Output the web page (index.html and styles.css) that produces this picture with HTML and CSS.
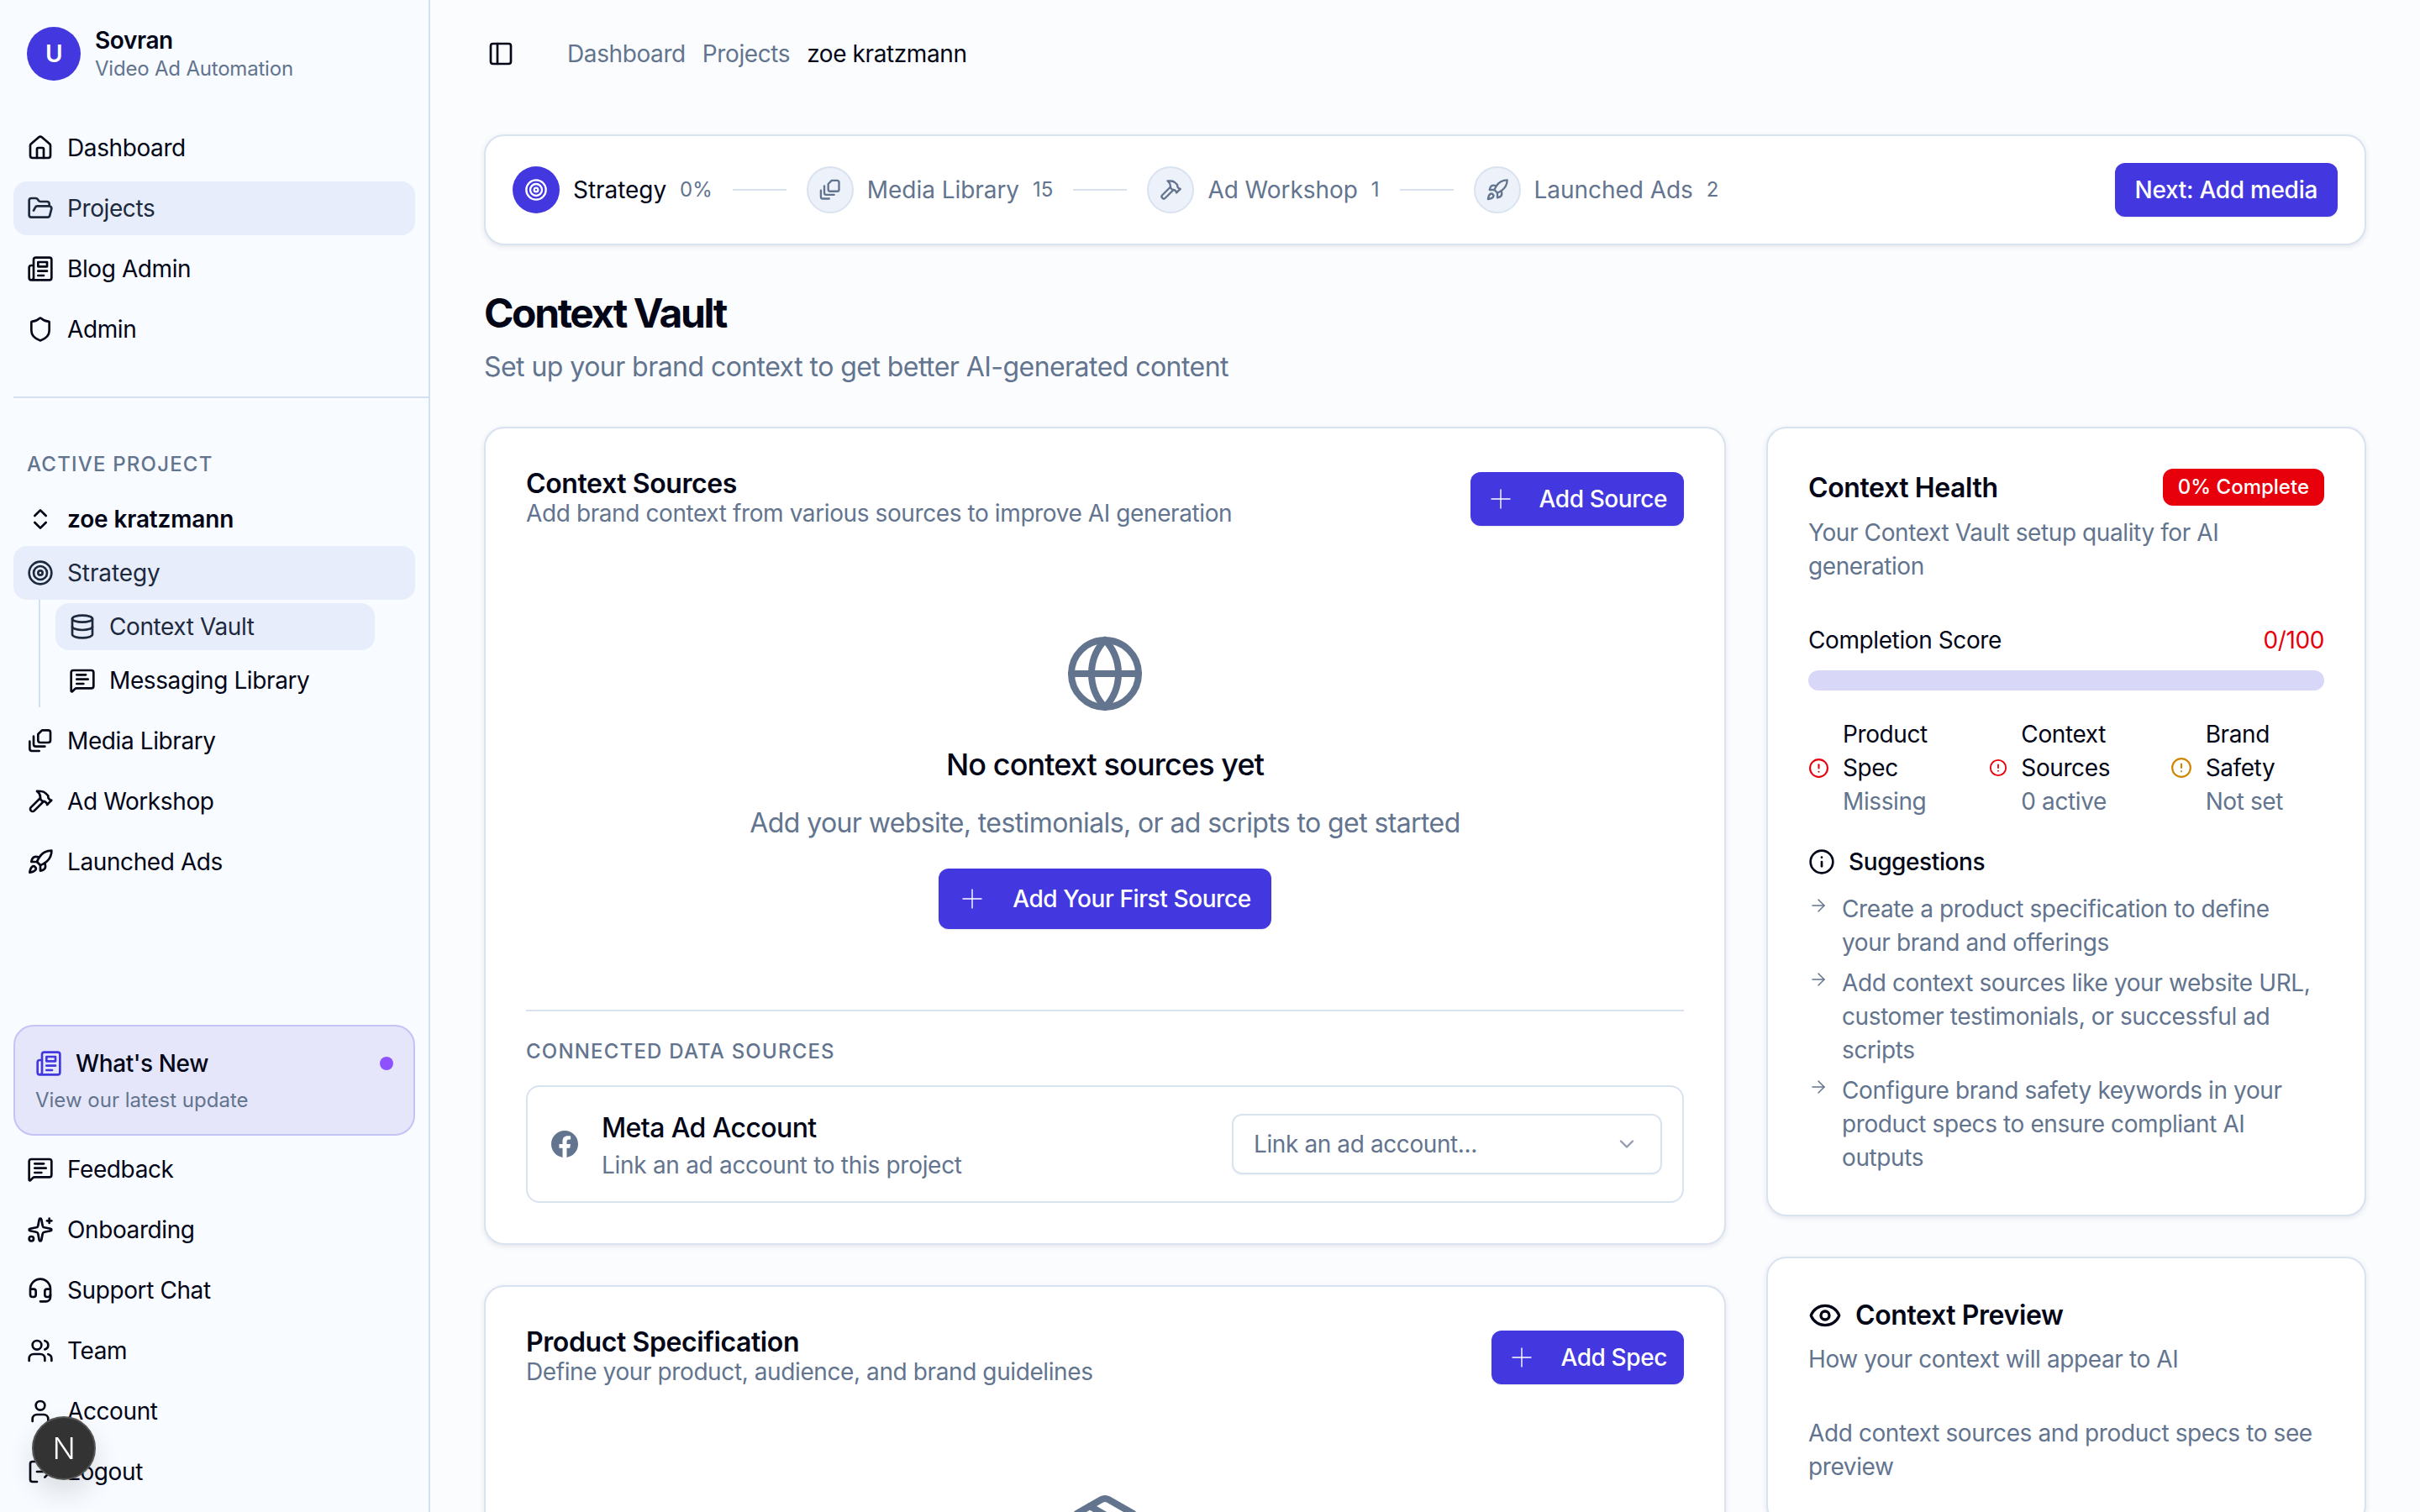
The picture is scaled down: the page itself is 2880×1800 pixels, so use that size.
FILE: index.html
```html
<!DOCTYPE html>
<html lang="en">
  <head>
    <meta charset="utf-8">
    <title>Context Vault - Sovran</title>
    <link rel="stylesheet" href="styles.css">
  </head>
  <body>
    <svg class="sprite" xmlns="http://www.w3.org/2000/svg">
      <symbol id="i-house" viewBox="0 0 24 24"><path d="M15 21v-8a1 1 0 0 0-1-1h-4a1 1 0 0 0-1 1v8"/><path d="M3 10a2 2 0 0 1 .709-1.528l7-5.999a2 2 0 0 1 2.582 0l7 5.999A2 2 0 0 1 21 10v9a2 2 0 0 1-2 2H5a2 2 0 0 1-2-2z"/></symbol>
      <symbol id="i-folder" viewBox="0 0 24 24"><path d="m6 14 1.5-2.9A2 2 0 0 1 9.24 10H20a2 2 0 0 1 1.94 2.5l-1.54 6a2 2 0 0 1-1.95 1.5H4a2 2 0 0 1-2-2V5a2 2 0 0 1 2-2h3.9a2 2 0 0 1 1.69.9l.81 1.2a2 2 0 0 0 1.67.9H18a2 2 0 0 1 2 2v2"/></symbol>
      <symbol id="i-news" viewBox="0 0 24 24"><path d="M4 22h16a2 2 0 0 0 2-2V4a2 2 0 0 0-2-2H8a2 2 0 0 0-2 2v16a2 2 0 0 1-2 2Zm0 0a2 2 0 0 1-2-2v-9c0-1.1.9-2 2-2h2"/><path d="M18 14h-8"/><path d="M15 18h-5"/><path d="M10 6h8v4h-8V6Z"/></symbol>
      <symbol id="i-shield" viewBox="0 0 24 24"><path d="M20 13c0 5-3.5 7.5-7.66 8.95a1 1 0 0 1-.67-.01C7.5 20.5 4 18 4 13V6a1 1 0 0 1 1-1c2 0 4.5-1.2 6.24-2.72a1.17 1.17 0 0 1 1.52 0C14.51 3.81 17 5 19 5a1 1 0 0 1 1 1z"/></symbol>
      <symbol id="i-updown" viewBox="0 0 24 24"><path d="m7 15 5 5 5-5"/><path d="m7 9 5-5 5 5"/></symbol>
      <symbol id="i-target" viewBox="0 0 24 24"><circle cx="12" cy="12" r="10"/><circle cx="12" cy="12" r="6"/><circle cx="12" cy="12" r="2"/></symbol>
      <symbol id="i-db" viewBox="0 0 24 24"><ellipse cx="12" cy="5" rx="9" ry="3"/><path d="M3 5V19A9 3 0 0 0 21 19V5"/><path d="M3 12A9 3 0 0 0 21 12"/></symbol>
      <symbol id="i-msg" viewBox="0 0 24 24"><path d="M22 17a2 2 0 0 1-2 2H6.828a2 2 0 0 0-1.414.586l-2.202 2.202A.71.71 0 0 1 2 21.286V5a2 2 0 0 1 2-2h16a2 2 0 0 1 2 2z"/><path d="M7 11h10"/><path d="M7 15h6"/><path d="M7 7h8"/></symbol>
      <symbol id="i-media" viewBox="0 0 24 24"><path d="M13.5 2.5H19a2 2 0 0 1 2 2v7a2 2 0 0 1-2 2h-7a2 2 0 0 1-2-2V6z"/><path d="M6 8v7a2 2 0 0 0 2 2h8"/><path d="M2.5 12.5V19a2 2 0 0 0 2 2H11"/></symbol>
      <symbol id="i-hammer" viewBox="0 0 24 24"><path d="m15 12-8.373 8.373a1 1 0 1 1-3-3L12 9"/><path d="m18 15 4-4"/><path d="m21.5 11.5-1.914-1.914A2 2 0 0 1 19 8.172V7l-2.26-2.26a6 6 0 0 0-4.202-1.756L9 2.96l.92.82A6.18 6.18 0 0 1 12 8.4V10l2 2h1.172a2 2 0 0 1 1.414.586L18.5 14.5"/></symbol>
      <symbol id="i-rocket" viewBox="0 0 24 24"><path d="M4.5 16.5c-1.5 1.26-2 5-2 5s3.74-.5 5-2c.71-.84.7-2.13-.09-2.91a2.18 2.18 0 0 0-2.91-.09z"/><path d="m12 15-3-3a22 22 0 0 1 2-3.95A12.88 12.88 0 0 1 22 2c0 2.72-.78 7.5-6 11a22.35 22.35 0 0 1-4 2z"/><path d="M9 12H4s.55-3.03 2-4c1.62-1.08 5 0 5 0"/><path d="M12 15v5s3.03-.55 4-2c1.08-1.62 0-5 0-5"/></symbol>
      <symbol id="i-spark" viewBox="0 0 24 24"><path d="M11.017 2.814a1 1 0 0 1 1.966 0l1.051 5.558a2 2 0 0 0 1.594 1.594l5.558 1.051a1 1 0 0 1 0 1.966l-5.558 1.051a2 2 0 0 0-1.594 1.594l-1.051 5.558a1 1 0 0 1-1.966 0l-1.051-5.558a2 2 0 0 0-1.594-1.594l-5.558-1.051a1 1 0 0 1 0-1.966l5.558-1.051a2 2 0 0 0 1.594-1.594z"/><path d="M20 2v4"/><path d="M22 4h-4"/><circle cx="4" cy="20" r="2"/></symbol>
      <symbol id="i-headset" viewBox="0 0 24 24"><path d="M3 11h3a2 2 0 0 1 2 2v3a2 2 0 0 1-2 2H5a2 2 0 0 1-2-2v-5Zm0 0a9 9 0 1 1 18 0m0 0v5a2 2 0 0 1-2 2h-1a2 2 0 0 1-2-2v-3a2 2 0 0 1 2-2h3Z"/><path d="M21 16v2a4 4 0 0 1-4 4h-5"/></symbol>
      <symbol id="i-users" viewBox="0 0 24 24"><path d="M16 21v-2a4 4 0 0 0-4-4H6a4 4 0 0 0-4 4v2"/><path d="M16 3.128a4 4 0 0 1 0 7.744"/><path d="M22 21v-2a4 4 0 0 0-3-3.87"/><circle cx="9" cy="7" r="4"/></symbol>
      <symbol id="i-user" viewBox="0 0 24 24"><path d="M19 21v-2a4 4 0 0 0-4-4H9a4 4 0 0 0-4 4v2"/><circle cx="12" cy="7" r="4"/></symbol>
      <symbol id="i-logout" viewBox="0 0 24 24"><path d="m16 17 5-5-5-5"/><path d="M21 12H9"/><path d="M9 21H5a2 2 0 0 1-2-2V5a2 2 0 0 1 2-2h4"/></symbol>
      <symbol id="i-panel" viewBox="0 0 24 24"><rect x="3" y="3" width="18" height="18" rx="2"/><path d="M9 3v18"/></symbol>
      <symbol id="i-plus" viewBox="0 0 24 24"><path d="M1 12h22"/><path d="M12 1v22"/></symbol>
      <symbol id="i-globe" viewBox="0 0 24 24"><circle cx="12" cy="12" r="10"/><path d="M12 2a14.5 14.5 0 0 0 0 20 14.5 14.5 0 0 0 0-20"/><path d="M2 12h20"/></symbol>
      <symbol id="i-chevron" viewBox="0 0 24 24"><path d="m6 9 6 6 6-6"/></symbol>
      <symbol id="i-alert" viewBox="0 0 24 24"><circle cx="12" cy="12" r="10"/><path d="M12 8v4"/><path d="M12 16h.01"/></symbol>
      <symbol id="i-info" viewBox="0 0 24 24"><circle cx="12" cy="12" r="10"/><path d="M12 16v-4"/><path d="M12 8h.01"/></symbol>
      <symbol id="i-arrow" viewBox="0 0 24 24"><path d="M5 12h14"/><path d="m12 5 7 7-7 7"/></symbol>
      <symbol id="i-eye" viewBox="0 0 24 24"><path d="M2.062 12.348a1 1 0 0 1 0-.696 10.75 10.75 0 0 1 19.876 0 1 1 0 0 1 0 .696 10.75 10.75 0 0 1-19.876 0"/><circle cx="12" cy="12" r="3"/></symbol>
      <symbol id="i-package" viewBox="0 0 24 24"><path d="M11 21.73a2 2 0 0 0 2 0l7-4A2 2 0 0 0 21 16V8a2 2 0 0 0-1-1.73l-7-4a2 2 0 0 0-2 0l-7 4A2 2 0 0 0 3 8v8a2 2 0 0 0 1 1.73z"/><path d="M12 22V12"/><path d="m3.3 7 8.7 5 8.7-5"/><path d="m7.5 4.27 9 5.15"/></symbol>
    </svg>

    <aside class="sidebar">
      <div class="brand">
        <div class="avatar">U</div>
        <div>
          <div class="brand-name">Sovran</div>
          <div class="brand-sub">Video Ad Automation</div>
        </div>
      </div>

      <nav class="nav">
        <a class="nav-item"><svg class="icon"><use href="#i-house"/></svg>Dashboard</a>
        <a class="nav-item active"><svg class="icon"><use href="#i-folder"/></svg>Projects</a>
        <a class="nav-item"><svg class="icon"><use href="#i-news"/></svg>Blog Admin</a>
        <a class="nav-item"><svg class="icon"><use href="#i-shield"/></svg>Admin</a>
      </nav>

      <hr class="side-rule">

      <div class="side-label">Active Project</div>
      <nav class="nav">
        <div>
          <a class="nav-item project"><svg class="icon"><use href="#i-updown"/></svg>zoe kratzmann</a>
          <a class="nav-item active strategy"><svg class="icon"><use href="#i-target"/></svg>Strategy</a>
          <div class="subnav">
            <a class="sub-item active"><svg class="icon"><use href="#i-db"/></svg>Context Vault</a>
            <a class="sub-item"><svg class="icon"><use href="#i-msg"/></svg>Messaging Library</a>
          </div>
        </div>
        <a class="nav-item"><svg class="icon"><use href="#i-media"/></svg>Media Library</a>
        <a class="nav-item"><svg class="icon"><use href="#i-hammer"/></svg>Ad Workshop</a>
        <a class="nav-item"><svg class="icon"><use href="#i-rocket"/></svg>Launched Ads</a>
      </nav>

      <div class="side-bottom">
        <div class="whats-new">
          <div class="whats-head">
            <svg class="icon"><use href="#i-news"/></svg>
            <span>What's New</span>
            <i class="dot"></i>
          </div>
          <div class="whats-sub">View our latest update</div>
        </div>
        <nav class="nav">
          <a class="nav-item"><svg class="icon"><use href="#i-msg"/></svg>Feedback</a>
          <a class="nav-item"><svg class="icon"><use href="#i-spark"/></svg>Onboarding</a>
          <a class="nav-item"><svg class="icon"><use href="#i-headset"/></svg>Support Chat</a>
          <a class="nav-item"><svg class="icon"><use href="#i-users"/></svg>Team</a>
          <a class="nav-item"><svg class="icon"><use href="#i-user"/></svg>Account</a>
          <a class="nav-item"><svg class="icon"><use href="#i-logout"/></svg>Logout</a>
        </nav>
      </div>
    </aside>

    <main class="main">
      <header class="topbar">
        <svg class="icon"><use href="#i-panel"/></svg>
        <div class="crumbs">
          <a>Dashboard</a>
          <a>Projects</a>
          <span>zoe kratzmann</span>
        </div>
      </header>

      <section class="card stepper">
        <div class="step current">
          <div class="step-dot"><svg class="icon-sm"><use href="#i-target"/></svg></div>
          <span class="step-name">Strategy</span><span class="step-count">0%</span>
        </div>
        <i class="step-line"></i>
        <div class="step">
          <div class="step-dot"><svg class="icon-sm"><use href="#i-media"/></svg></div>
          <span class="step-name">Media Library</span><span class="step-count">15</span>
        </div>
        <i class="step-line"></i>
        <div class="step">
          <div class="step-dot"><svg class="icon-sm"><use href="#i-hammer"/></svg></div>
          <span class="step-name">Ad Workshop</span><span class="step-count">1</span>
        </div>
        <i class="step-line"></i>
        <div class="step">
          <div class="step-dot"><svg class="icon-sm"><use href="#i-rocket"/></svg></div>
          <span class="step-name">Launched Ads</span><span class="step-count">2</span>
        </div>
        <button class="btn next">Next: Add media</button>
      </section>

      <h1 class="page-title">Context Vault</h1>
      <p class="page-sub">Set up your brand context to get better AI-generated content</p>

      <div class="columns">
        <div class="col">
          <section class="card panel">
            <div class="panel-head">
              <div>
                <h2>Context Sources</h2>
                <p>Add brand context from various sources to improve AI generation</p>
              </div>
              <button class="btn add"><svg class="plus"><use href="#i-plus"/></svg>Add Source</button>
            </div>
            <div class="empty">
              <svg class="empty-icon"><use href="#i-globe"/></svg>
              <h3>No context sources yet</h3>
              <p>Add your website, testimonials, or ad scripts to get started</p>
              <button class="btn first"><svg class="plus"><use href="#i-plus"/></svg>Add Your First Source</button>
            </div>
            <hr class="rule">
            <div class="section-label">Connected Data Sources</div>
            <div class="source">
              <svg class="fb" viewBox="0 0 24 24"><path d="M24 12.073c0-6.627-5.373-12-12-12s-12 5.373-12 12c0 5.99 4.388 10.954 10.125 11.854v-8.385H7.078v-3.47h3.047V9.43c0-3.007 1.792-4.669 4.533-4.669 1.312 0 2.686.235 2.686.235v2.953H15.83c-1.491 0-1.956.925-1.956 1.874v2.25h3.328l-.532 3.47h-2.796v8.385C19.612 23.027 24 18.062 24 12.073z"/></svg>
              <div class="source-text">
                <div class="source-name">Meta Ad Account</div>
                <div class="source-sub">Link an ad account to this project</div>
              </div>
              <div class="select">
                <span>Link an ad account...</span>
                <svg class="icon-sm"><use href="#i-chevron"/></svg>
              </div>
            </div>
          </section>

          <section class="card panel">
            <div class="panel-head">
              <div>
                <h2>Product Specification</h2>
                <p>Define your product, audience, and brand guidelines</p>
              </div>
              <button class="btn add"><svg class="plus"><use href="#i-plus"/></svg>Add Spec</button>
            </div>
            <div class="empty">
              <svg class="empty-icon"><use href="#i-package"/></svg>
            </div>
          </section>
        </div>

        <div class="col">
          <section class="card panel health">
            <div class="health-head">
              <h2>Context Health</h2>
              <span class="badge">0% Complete</span>
            </div>
            <p class="muted">Your Context Vault setup quality for AI generation</p>
            <div class="score">
              <span>Completion Score</span>
              <span class="red">0/100</span>
            </div>
            <div class="bar"></div>
            <div class="checks">
              <div class="check">
                <svg class="check-icon red size-a"><use href="#i-alert"/></svg>
                <div>Product Spec<div class="muted">Missing</div></div>
              </div>
              <div class="check">
                <svg class="check-icon red size-b"><use href="#i-alert"/></svg>
                <div>Context Sources<div class="muted">0 active</div></div>
              </div>
              <div class="check">
                <svg class="check-icon amber size-c"><use href="#i-alert"/></svg>
                <div>Brand Safety<div class="muted">Not set</div></div>
              </div>
            </div>
            <div class="tips-head"><svg class="icon"><use href="#i-info"/></svg>Suggestions</div>
            <ul class="tips">
              <li><svg class="tip-arrow"><use href="#i-arrow"/></svg><span>Create a product specification to define your brand and offerings</span></li>
              <li><svg class="tip-arrow"><use href="#i-arrow"/></svg><span>Add context sources like your website URL, customer testimonials, or successful ad scripts</span></li>
              <li><svg class="tip-arrow"><use href="#i-arrow"/></svg><span>Configure brand safety keywords in your product specs to ensure compliant AI outputs</span></li>
            </ul>
          </section>

          <section class="card panel preview">
            <h2><svg class="eye"><use href="#i-eye"/></svg>Context Preview</h2>
            <p class="muted">How your context will appear to AI</p>
            <p class="muted preview-note">Add context sources and product specs to see preview</p>
          </section>
        </div>
      </div>
    </main>

    <div class="dev-badge"><span>N</span></div>
  </body>
</html>
```
FILE: styles.css
```css
* {
    box-sizing: border-box;
}

body {
    margin: 0;
    height: 1800px;
    overflow: hidden;
    display: flex;
    background: #fbfcfe;
    color: #020617;
    font-size: 28px;
    line-height: 40px;
    letter-spacing: -.4px;
    font-family: Inter, "Noto Sans", sans-serif;
}

h1, h2, h3, p, ul {
    margin: 0;
    padding: 0;
}

.sprite {
    display: none;
}

svg {
    fill: none;
    stroke: currentColor;
    stroke-width: 2;
    stroke-linecap: round;
    stroke-linejoin: round;
    flex: none;
}

.icon {
    width: 32px;
    height: 32px;
}

.icon-sm {
    width: 28px;
    height: 28px;
}

.muted {
    color: #62748e;
}

.red {
    color: #e7000b;
}

.amber {
    color: #d08700;
}

/* sidebar */

.sidebar {
    width: 512px;
    flex: none;
    height: 1800px;
    display: flex;
    flex-direction: column;
    padding: 32px 0 16px 16px;
    background: #f8fbff;
    border-right: 2px solid #d5e0ef;
}

.brand {
    display: flex;
    align-items: center;
    gap: 17px;
    padding-left: 16px;
    height: 64px;
}

.avatar {
    width: 64px;
    height: 64px;
    border-radius: 50%;
    background: #4338e0;
    color: white;
    display: flex;
    align-items: center;
    justify-content: center;
    font-weight: 600;
}

.brand-name {
    font-weight: 600;
    line-height: 36px;
}

.brand-sub {
    font-size: 24px;
    line-height: 32px;
    letter-spacing: -.2px;
    color: #62748e;
}

.nav {
    display: flex;
    flex-direction: column;
    gap: 8px;
    width: 478px;
}

.brand + .nav {
    margin-top: 48px;
}

.nav-item {
    display: flex;
    align-items: center;
    gap: 16px;
    height: 64px;
    padding: 0 16px;
    border-radius: 16px;
}

.active {
    background: #e7edfb;
    color: #1d293d;
}

.project {
    font-weight: 600;
    letter-spacing: -.15px;
}

.strategy {
    letter-spacing: -.1px;
}

.side-rule {
    margin: 48px 0 0;
    border: 0;
    border-top: 2px solid #d5e0ef;
}

.side-label {
    margin: 63px 0 17px;
    padding-left: 16px;
    font-size: 24px;
    line-height: 32px;
    font-weight: 500;
    letter-spacing: 1.2px;
    text-transform: uppercase;
    color: #62748e;
}

.subnav {
    display: flex;
    flex-direction: column;
    gap: 8px;
    margin-left: 30px;
    margin-right: 48px;
    padding: 4px 0 4px 18px;
    border-left: 2px solid #d5e0ef;
}

.sub-item {
    display: flex;
    align-items: center;
    gap: 16px;
    height: 56px;
    padding: 0 16px;
    border-radius: 16px;
}

.side-bottom {
    margin-top: auto;
}

.whats-new {
    width: 478px;
    height: 132px;
    margin-bottom: 8px;
    padding: 24px;
    background: #e5e6fa;
    border: 2px solid #c4c3f5;
    border-radius: 24px;
}

.whats-head {
    display: flex;
    align-items: center;
    gap: 16px;
    font-weight: 500;
}

.whats-head .icon {
    color: #4338e0;
}

.dot {
    width: 16px;
    height: 16px;
    margin-left: auto;
    border-radius: 50%;
    background: #8e51ff;
}

.whats-sub {
    margin-top: 8px;
    font-size: 24px;
    line-height: 32px;
    letter-spacing: 0;
    color: #62748e;
}

/* main */

.main {
    flex: 1;
    min-width: 0;
    padding: 0 64px;
}

.topbar {
    height: 128px;
    display: flex;
    align-items: center;
    gap: 63px;
    padding-left: 4px;
}

.crumbs {
    display: flex;
    gap: 20px;
    color: #62748e;
}

.crumbs span {
    color: #020617;
}

.card {
    background: white;
    border: 2px solid #d9e3ef;
    border-radius: 24px;
    box-shadow: 0 2px 6px rgba(15, 40, 90, .1);
}

.stepper {
    margin-top: 32px;
    height: 132px;
    display: flex;
    align-items: center;
    gap: 24px;
    padding: 0 32px;
    letter-spacing: -.05px;
}

.step {
    display: flex;
    align-items: center;
    color: #62748e;
}

.step.current {
    color: #020617;
}

.step-dot {
    width: 56px;
    height: 56px;
    margin-right: 16px;
    border-radius: 50%;
    display: flex;
    align-items: center;
    justify-content: center;
    background: #edf1f9;
    border: 2px solid #d9e3ef;
}

.current .step-dot {
    background: #4338e0;
    border: 0;
    color: white;
}

.step-name {
    margin-right: 16px;
}

.step-count {
    font-size: 24px;
    letter-spacing: 0;
    color: #62748e;
}

.step-line {
    width: 64px;
    height: 2px;
    background: #d9e3ef;
}

.btn {
    display: flex;
    align-items: center;
    border: 0;
    border-radius: 12px;
    background: #4338e0;
    color: white;
    font: inherit;
    letter-spacing: -.4px;
    font-weight: 500;
    box-shadow: 0 1px 2px rgba(0, 0, 0, .1);
}

.next {
    margin-left: auto;
    height: 64px;
    padding: 0 24px;
    letter-spacing: -.3px;
}

.plus {
    width: 24px;
    height: 24px;
    stroke-width: 1.4;
}

.add {
    height: 64px;
    padding: 0 20px 0 24px;
    gap: 34px;
}

.page-title {
    margin-top: 53px;
    font-size: 48px;
    line-height: 56px;
    font-weight: 700;
    letter-spacing: -2.4px;
}

.page-sub {
    margin-top: 12px;
    font-size: 32px;
    line-height: 48px;
    letter-spacing: -.55px;
    color: #62748e;
}

.columns {
    display: grid;
    grid-template-columns: minmax(0, 1fr) 714px;
    gap: 48px;
    margin-top: 47px;
    align-items: start;
}

.col {
    display: flex;
    flex-direction: column;
    gap: 48px;
}

.panel {
    padding: 48px;
}

.panel h2 {
    font-size: 32px;
    font-weight: 600;
    line-height: 36px;
}

.panel-head {
    display: flex;
    align-items: center;
    justify-content: space-between;
}

.panel-head p {
    line-height: 36px;
    margin-top: -1px;
    padding-bottom: 1px;
    color: #62748e;
}

.empty {
    display: flex;
    flex-direction: column;
    align-items: center;
    padding-top: 124px;
}

.empty-icon {
    width: 96px;
    height: 96px;
    color: #62748e;
}

.empty h3 {
    margin-top: 36px;
    font-size: 36px;
    line-height: 48px;
    letter-spacing: -.9px;
    font-weight: 500;
}

.empty p {
    margin-top: 22px;
    font-size: 32px;
    line-height: 48px;
    letter-spacing: -.6px;
    color: #62748e;
}

.first {
    margin-top: 30px;
    height: 72px;
    padding: 0 24px 0 28px;
    gap: 36px;
}

.rule {
    margin: 96px 0 0;
    border: 0;
    border-top: 2px solid #d9e3ef;
}

.section-label {
    margin: 32px 0 24px;
    font-size: 24px;
    line-height: 32px;
    font-weight: 500;
    letter-spacing: 1.2px;
    text-transform: uppercase;
    color: #62748e;
}

.source {
    display: flex;
    align-items: center;
    gap: 28px;
    padding: 24px 24px 24px 28px;
    border: 2px solid #d9e3ef;
    border-radius: 16px;
}

.fb {
    width: 32px;
    height: 32px;
    fill: #62748e;
    stroke: none;
}

.source-text {
    flex: 1;
}

.source-name {
    font-size: 32px;
    font-weight: 500;
    line-height: 50px;
    letter-spacing: -.6px;
}

.source-sub {
    line-height: 38px;
    letter-spacing: -.3px;
    color: #62748e;
}

.select {
    width: 512px;
    height: 72px;
    display: flex;
    align-items: center;
    justify-content: space-between;
    padding: 0 26px 0 24px;
    border: 2px solid #d9e3ef;
    border-radius: 12px;
    color: #62748e;
    box-shadow: 0 1px 2px rgba(0, 0, 0, .05);
}

.select svg {
    opacity: .7;
}

.health-head {
    display: flex;
    align-items: center;
    justify-content: space-between;
    height: 44px;
    margin-bottom: 12px;
}

.health-head h2 {
    padding-top: 2px;
}

.badge {
    height: 44px;
    padding: 0 18px;
    border-radius: 12px;
    background: #e7000b;
    color: white;
    font-size: 24px;
    line-height: 44px;
    letter-spacing: 0;
    font-weight: 500;
}

.score {
    display: flex;
    justify-content: space-between;
    margin-top: 48px;
}

.bar {
    height: 24px;
    margin-top: 16px;
    border-radius: 12px;
    background: #d9d7f8;
}

.checks {
    display: grid;
    grid-template-columns: repeat(3, 1fr);
    gap: 32px;
    margin-top: 32px;
}

.check {
    display: flex;
    align-items: center;
    gap: 16px;
}

.size-a {
    width: 25px;
    height: 25px;
}

.size-b {
    width: 22px;
    height: 22px;
}

.size-c {
    width: 26px;
    height: 26px;
}

.tips-head {
    display: flex;
    align-items: center;
    gap: 16px;
    margin-top: 32px;
    font-weight: 500;
}

.tips {
    list-style: none;
    margin-top: 16px;
    padding-right: 10px;
    display: flex;
    flex-direction: column;
    gap: 8px;
    color: #62748e;
}

.tips li {
    display: flex;
    gap: 16px;
}

.tip-arrow {
    width: 24px;
    height: 24px;
    margin-top: 4px;
    stroke-width: 1.5;
}

.preview h2 {
    display: flex;
    align-items: center;
    gap: 16px;
    line-height: 40px;
}

.eye {
    width: 40px;
    height: 40px;
}

.preview .muted {
    margin-top: 12px;
}

.preview .preview-note {
    margin-top: 48px;
}

/* dev tools indicator sits over the sidebar */

.dev-badge {
    position: fixed;
    left: 38px;
    bottom: 38px;
    width: 76px;
    height: 76px;
    border-radius: 50%;
    display: flex;
    align-items: center;
    justify-content: center;
    background: #333;
    border: 2px solid #555;
    color: white;
    font-size: 36px;
    font-weight: 300;
    box-shadow: 0 16px 32px rgba(0, 0, 0, .12);
}
```
